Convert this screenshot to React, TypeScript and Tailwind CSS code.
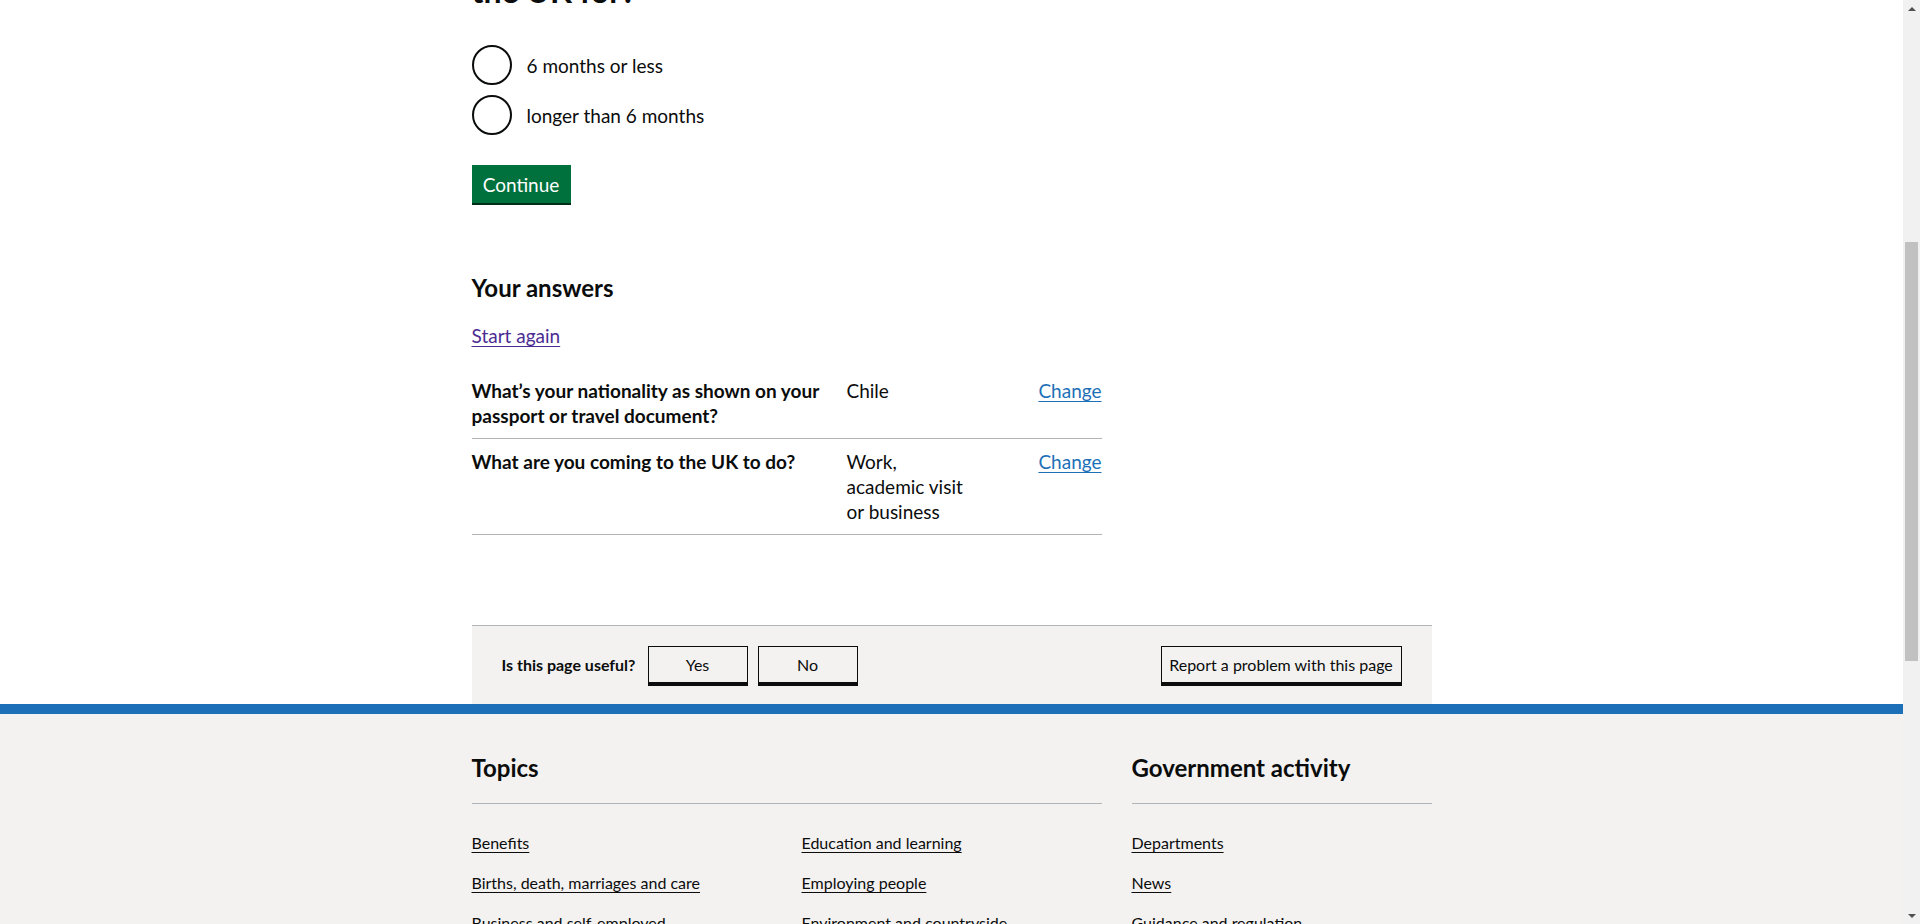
import { useLayoutEffect, useRef } from 'react';

const topicsLeft = [
  'Benefits',
  'Births, death, marriages and care',
  'Business and self-employed',
  'Childcare and parenting',
  'Citizenship and living in the UK',
  'Crime, justice and the law',
  'Disabled people',
  'Driving and transport',
];

const topicsRight = [
  'Education and learning',
  'Employing people',
  'Environment and countryside',
  'Housing and local services',
  'Money and tax',
  'Passports, travel and living abroad',
  'Visas and immigration',
  'Working, jobs and pensions',
];

const govActivity = [
  'Departments',
  'News',
  'Guidance and regulation',
  'Research and statistics',
  'Policy papers and consultations',
  'Transparency',
  'How government works',
  'Get involved',
];

const metaLinks = [
  'Help',
  'Privacy',
  'Cookies',
  'Accessibility statement',
  'Contact',
  'Terms and conditions',
  'Rhestr o Wasanaethau Cymraeg',
  'Government Digital Service',
];

const answers = [
  { q: 'What’s your nationality as shown on your passport or travel document?', a: 'Chile' },
  { q: 'What are you coming to the UK to do?', a: 'Work, academic visit or business' },
];

function FooterList({ items }: { items: string[] }) {
  return (
    <ul>
      {items.map((item) => (
        <li key={item} className="mb-5 leading-5">
          <a href="#" className="text-[16px] leading-5 underline underline-offset-[0.16em] decoration-1 text-[#0b0c0c]">
            {item}
          </a>
        </li>
      ))}
    </ul>
  );
}

function ScrollArrow({ up }: { up?: boolean }) {
  return (
    <div className="h-[17px] w-full flex items-center justify-center">
      <svg viewBox="0 0 8 4" className="w-2 h-1" fill="#505050">
        <path d={up ? 'M0 4 L4 0 L8 4 Z' : 'M0 0 L8 0 L4 4 Z'} />
      </svg>
    </div>
  );
}

export default function App() {
  const scrollRef = useRef<HTMLDivElement>(null);
  const radioRef = useRef<HTMLDivElement>(null);

  useLayoutEffect(() => {
    const box = scrollRef.current;
    const radio = radioRef.current;
    if (!box || !radio) return;
    // page is shown scrolled, first radio 45px below the top edge
    box.scrollTop = radio.getBoundingClientRect().top - box.getBoundingClientRect().top - 45;
  }, []);

  return (
    <div className="flex h-[924px] bg-white text-[#0b0c0c] font-['Lato',sans-serif]">
      <div ref={scrollRef} className="flex-1 overflow-hidden">
        {/* Cookie banner */}
        <div className="bg-[#f3f2f1] py-5">
          <div className="max-w-[960px] mx-auto">
            <div className="w-[630px]">
              <h2 className="text-[24px] leading-[30px] font-bold mb-5">Cookies on GOV.UK</h2>
              <p className="text-[19px] leading-[25px] mb-4">We use some essential cookies to make this website work.</p>
              <p className="text-[19px] leading-[25px] mb-5">
                We’d like to set additional cookies to understand how you use GOV.UK, remember your settings and improve
                government services.
              </p>
            </div>
            <div className="flex items-center gap-[15px]">
              <button className="bg-[#00703c] text-white text-[19px] leading-none px-[10px] pt-2 pb-[7px] shadow-[0_2px_0_#002d18]">
                Accept additional cookies
              </button>
              <button className="bg-[#00703c] text-white text-[19px] leading-none px-[10px] pt-2 pb-[7px] shadow-[0_2px_0_#002d18]">
                Reject additional cookies
              </button>
              <a href="#" className="text-[19px] underline text-[#1d70b8]">View cookies</a>
            </div>
          </div>
        </div>

        {/* Header */}
        <header className="bg-[#0b0c0c]">
          <div className="max-w-[960px] mx-auto pt-2 border-b-[10px] border-[#1d70b8]">
            <div className="h-[52px] flex items-center gap-2 text-white">
              <svg viewBox="0 0 36 32" className="w-9 h-8" fill="currentColor">
                <path d="M18 2l3 4 4-2-1 5 5 1-3 4 4 3-5 1 1 5-5-2-3 4-3-4-5 2 1-5-5-1 4-3-3-4 5-1-1-5 4 2z" />
              </svg>
              <span className="text-[30px] font-bold leading-none tracking-tight">GOV.UK</span>
            </div>
          </div>
        </header>

        {/* Main */}
        <main className="max-w-[960px] w-full mx-auto pt-[15px]">
          <div className="text-[16px] leading-5 mb-[45px] flex gap-3">
            <a href="#" className="underline">Home</a>
            <span>›</span>
            <a href="#" className="underline">Entering and staying in the UK</a>
            <span>›</span>
            <a href="#" className="underline">Visas and immigration</a>
          </div>

          <div className="w-[630px]">
            <span className="block text-[24px] leading-[30px] text-[#505a5f] mb-[5px]">Check if you need a UK visa</span>
            <h1 className="text-[32px] leading-[40px] font-bold mb-[34px]">
              How long are you planning to work in
              <br />
              the UK for?
            </h1>

            <div ref={radioRef} className="flex flex-col gap-[10px]">
              {['6 months or less', 'longer than 6 months'].map((label) => (
                <div key={label} className="flex items-start">
                  <span className="w-10 h-10 rounded-full border-2 border-[#0b0c0c] bg-white shrink-0" />
                  <span className="pl-[15px] pt-2 pb-[5px] text-[19px] leading-[25px]">{label}</span>
                </div>
              ))}
            </div>

            <button className="mt-[30px] w-[99px] h-[38px] bg-[#00703c] text-white text-[19px] leading-none shadow-[0_2px_0_#002d18]">
              Continue
            </button>

            {/* Previous answers */}
            <h2 className="mt-[70px] text-[24px] leading-[30px] font-bold mb-5">Your answers</h2>
            <p className="text-[19px] leading-[25px] mb-5">
              <a href="#" className="underline underline-offset-[0.16em] decoration-1 text-[#4c2c92]">Start again</a>
            </p>

            <div>
              {answers.map((row) => (
                <div key={row.q} className="flex border-b border-[#b1b4b6] text-[19px] leading-[25px]">
                  <div className="w-[375px] shrink-0 pr-5 pt-[10px] pb-[10px] font-bold">{row.q}</div>
                  <div className="w-[130px] shrink-0 pt-[10px] pb-[10px]">{row.a}</div>
                  <div className="flex-1 text-right pt-[10px] pb-[10px]">
                    <a href="#" className="underline underline-offset-[0.16em] decoration-1 text-[#1d70b8]">Change</a>
                  </div>
                </div>
              ))}
            </div>
          </div>

          {/* Feedback */}
          <div className="mt-[90px] border-t border-[#b1b4b6] bg-[#f3f2f1] px-[30px] pt-5 pb-[21px] flex items-center">
            <span className="w-[146px] text-[16px] font-bold">Is this page useful?</span>
            <div className="flex gap-[10px]">
              {['Yes', 'No'].map((label) => (
                <button
                  key={label}
                  className="w-[100px] h-[37px] border border-[#0b0c0c] text-[16px] shadow-[0_3px_0_#0b0c0c]"
                >
                  {label}
                </button>
              ))}
            </div>
            <button className="ml-auto w-[241px] h-[37px] border border-[#0b0c0c] text-[16px] shadow-[0_3px_0_#0b0c0c]">
              Report a problem with this page
            </button>
          </div>
        </main>

        {/* Footer */}
        <footer className="bg-[#f3f2f1] border-t-[10px] border-[#1d70b8]">
          <div className="max-w-[960px] mx-auto pt-[39px] pb-[25px]">
            <div className="grid grid-cols-[630px_300px] gap-x-[30px]">
              <div>
                <h2 className="text-[24px] leading-[30px] font-bold pb-5 border-b border-[#b1b4b6] mb-[29px]">Topics</h2>
                <div className="grid grid-cols-2 gap-x-[30px]">
                  <FooterList items={topicsLeft} />
                  <FooterList items={topicsRight} />
                </div>
              </div>
              <div>
                <h2 className="text-[24px] leading-[30px] font-bold pb-5 border-b border-[#b1b4b6] mb-[29px]">
                  Government activity
                </h2>
                <FooterList items={govActivity} />
              </div>
            </div>

            <hr className="border-[#b1b4b6] mt-[10px] mb-[25px]" />

            <div className="flex items-end justify-between">
              <div>
                <ul className="flex flex-wrap gap-x-[15px] gap-y-2 mb-[25px] max-w-[640px]">
                  {metaLinks.map((link) => (
                    <li key={link}>
                      <a href="#" className="text-[16px] underline">{link}</a>
                    </li>
                  ))}
                </ul>
                <p className="text-[16px] leading-5">
                  All content is available under the{' '}
                  <a href="#" className="underline">Open Government Licence v3.0</a>, except where otherwise stated
                </p>
              </div>
              <a href="#" className="text-[16px] underline">© Crown copyright</a>
            </div>
          </div>
        </footer>
      </div>

      {/* Window scrollbar */}
      <div className="w-[17px] shrink-0 bg-[#f1f1f1] flex flex-col items-center">
        <ScrollArrow up />
        <div className="h-[225px] shrink-0" />
        <div className="w-[13px] h-[419px] shrink-0 bg-[#c1c1c1]" />
        <div className="flex-1" />
        <ScrollArrow />
      </div>
    </div>
  );
}
